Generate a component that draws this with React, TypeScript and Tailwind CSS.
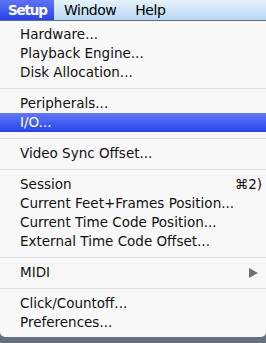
import React from "react";

const font = { fontFamily: '"DejaVu Sans", "Lucida Grande", sans-serif' };

function Item({ label, shortcut, arrow, active }: { label: string; shortcut?: string; arrow?: boolean; active?: boolean }) {
  return (
    <div
      className={
        "flex h-[19px] items-center justify-between pl-[20px] pr-[6px] text-[13.5px] leading-none " +
        (active ? "bg-gradient-to-b from-[#6277f4] to-[#2a40ea] text-white" : "text-[#111]")
      }
    >
      <span>{label}</span>
      {shortcut && <span className="mr-[-2px]">{shortcut}</span>}
      {arrow && (
        <svg width="9" height="10" viewBox="0 0 9 10" className="mr-[2px]">
          <path d="M0 0 L9 5 L0 10 Z" fill="#707070" />
        </svg>
      )}
    </div>
  );
}

function Sep() {
  return (
    <div className="flex h-[12px] items-center">
      <div className="h-px w-full bg-[#dedede]" />
    </div>
  );
}

export default function App() {
  return (
    <div className="relative h-[343px] w-[266px] overflow-hidden bg-[#67717d]" style={font}>
      <div className="flex h-[21px] items-center border-b border-[#5c6e80] bg-gradient-to-b from-[#e6f2fb] to-[#b9d8f2] text-[14px] text-black">
        <div className="flex h-full w-[54px] items-center bg-gradient-to-b from-[#5e73f2] to-[#2b41e9] pl-[8px] text-[13.5px] font-bold tracking-[-1.2px] text-white">
          Setup
        </div>
        <div className="pl-[10px] tracking-[-0.5px]">Window</div>
        <div className="pl-[19px] tracking-[-0.4px]">Help</div>
      </div>
      <div className="rounded-b-[5px] bg-[#f8f8f8] pt-[4px] pb-[5px]">
        <Item label="Hardware..." />
        <Item label="Playback Engine..." />
        <Item label="Disk Allocation..." />
        <Sep />
        <Item label="Peripherals..." />
        <Item label="I/O..." active />
        <Sep />
        <Item label="Video Sync Offset..." />
        <Sep />
        <Item label="Session" shortcut="⌘2)" />
        <Item label="Current Feet+Frames Position..." />
        <Item label="Current Time Code Position..." />
        <Item label="External Time Code Offset..." />
        <Sep />
        <Item label="MIDI" arrow />
        <Sep />
        <Item label="Click/Countoff..." />
        <Item label="Preferences..." />
      </div>
    </div>
  );
}
